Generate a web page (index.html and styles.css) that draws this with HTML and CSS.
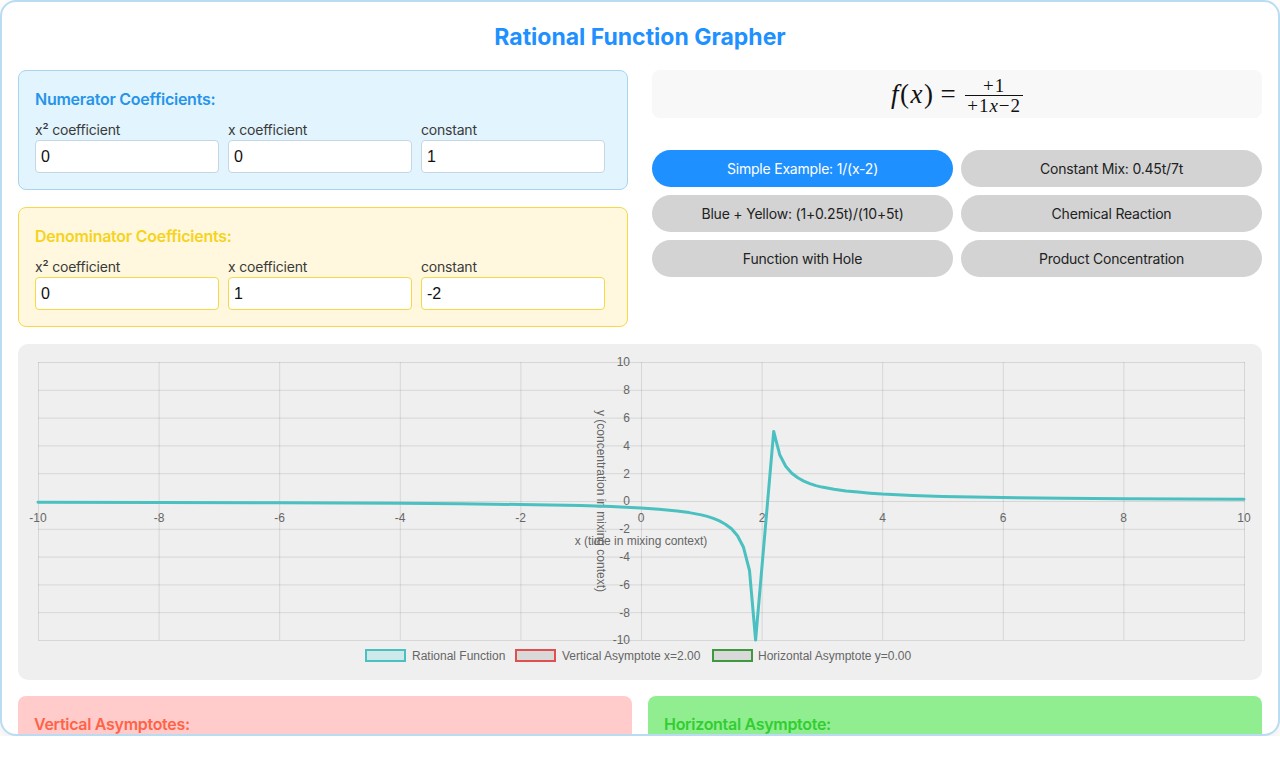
FILE: index.html
```html
<!DOCTYPE html>
<html>
<head>
<meta charset="utf-8">
<link rel="stylesheet" href="styles.css">
</head>
<body>
<div class="app">
  <h1 class="title">Rational Function Grapher</h1>
  <div class="top">
    <div class="coeffs">
      <section class="panel panel-num">
        <h3 class="panel-head">Numerator Coefficients:</h3>
        <div class="fields">
          <label class="field"><span class="field-label">x² coefficient</span><input class="field-input" value="0"></label>
          <label class="field"><span class="field-label">x coefficient</span><input class="field-input" value="0"></label>
          <label class="field"><span class="field-label">constant</span><input class="field-input" value="1"></label>
        </div>
      </section>
      <section class="panel panel-den">
        <h3 class="panel-head">Denominator Coefficients:</h3>
        <div class="fields">
          <label class="field"><span class="field-label">x² coefficient</span><input class="field-input" value="0"></label>
          <label class="field"><span class="field-label">x coefficient</span><input class="field-input" value="1"></label>
          <label class="field"><span class="field-label">constant</span><input class="field-input" value="-2"></label>
        </div>
      </section>
    </div>
    <div class="side">
      <div class="formula">
        <span class="math"><i>f</i>(<i>x</i>)</span><span class="math eq">=</span>
        <span class="frac"><span class="frac-num">+1</span><span class="frac-den">+1<i>x</i>−2</span></span>
      </div>
      <div class="examples">
        <button class="ex-btn active">Simple Example: 1/(x-2)</button>
        <button class="ex-btn">Constant Mix: 0.45t/7t</button>
        <button class="ex-btn">Blue + Yellow: (1+0.25t)/(10+5t)</button>
        <button class="ex-btn">Chemical Reaction</button>
        <button class="ex-btn">Function with Hole</button>
        <button class="ex-btn">Product Concentration</button>
      </div>
    </div>
  </div>
  <div class="chart">
    <svg class="chart-svg" width="1244" height="336" viewBox="0 0 1244 336">
      <g stroke="rgba(0,0,0,0.1)" stroke-width="1">
        <line x1="20.5" y1="18" x2="20.5" y2="296"/>
        <line x1="141.1" y1="18" x2="141.1" y2="296"/>
        <line x1="261.7" y1="18" x2="261.7" y2="296"/>
        <line x1="382.3" y1="18" x2="382.3" y2="296"/>
        <line x1="502.9" y1="18" x2="502.9" y2="296"/>
        <line x1="623.5" y1="18" x2="623.5" y2="296"/>
        <line x1="744.1" y1="18" x2="744.1" y2="296"/>
        <line x1="864.7" y1="18" x2="864.7" y2="296"/>
        <line x1="985.3" y1="18" x2="985.3" y2="296"/>
        <line x1="1105.9" y1="18" x2="1105.9" y2="296"/>
        <line x1="1226.5" y1="18" x2="1226.5" y2="296"/>
        <line x1="20" y1="18.5" x2="1227" y2="18.5"/>
        <line x1="20" y1="46.3" x2="1227" y2="46.3"/>
        <line x1="20" y1="74.1" x2="1227" y2="74.1"/>
        <line x1="20" y1="101.9" x2="1227" y2="101.9"/>
        <line x1="20" y1="129.7" x2="1227" y2="129.7"/>
        <line x1="20" y1="157.5" x2="1227" y2="157.5"/>
        <line x1="20" y1="185.3" x2="1227" y2="185.3"/>
        <line x1="20" y1="213.1" x2="1227" y2="213.1"/>
        <line x1="20" y1="240.9" x2="1227" y2="240.9"/>
        <line x1="20" y1="268.7" x2="1227" y2="268.7"/>
        <line x1="20" y1="296.5" x2="1227" y2="296.5"/>
      </g>
      <g class="tick" text-anchor="end">
        <text x="612" y="22">10</text>
        <text x="612" y="50">8</text>
        <text x="612" y="78">6</text>
        <text x="612" y="106">4</text>
        <text x="612" y="134">2</text>
        <text x="612" y="161">0</text>
        <text x="612" y="189">-2</text>
        <text x="612" y="217">-4</text>
        <text x="612" y="245">-6</text>
        <text x="612" y="273">-8</text>
        <text x="612" y="300">-10</text>
      </g>
      <g class="tick" text-anchor="middle">
        <text x="20" y="178">-10</text>
        <text x="141" y="178">-8</text>
        <text x="261.5" y="178">-6</text>
        <text x="382" y="178">-4</text>
        <text x="502.5" y="178">-2</text>
        <text x="623" y="178">0</text>
        <text x="744" y="178">2</text>
        <text x="864.5" y="178">4</text>
        <text x="985" y="178">6</text>
        <text x="1105.5" y="178">8</text>
        <text x="1226" y="178">10</text>
      </g>
      <text class="tick" x="623" y="201" text-anchor="middle">x (time in mixing context)</text>
      <text class="tick" x="0" y="0" text-anchor="middle" transform="translate(579 157) rotate(90)">y (concentration in mixing context)</text>
      <polyline fill="none" stroke="rgb(75,192,192)" stroke-width="3" stroke-linejoin="round" stroke-linecap="round"
        points="20,158.2 141,158.4 261.2,158.7 381.8,159.3 442.1,159.8 502.4,160.5 562.7,161.6 593,162.5 623,164 641.1,165.3 659.2,166.9 671.2,168.6 683.3,170.9 689.3,172.4 695.4,174.4 701.4,176.9 707.4,180.2 713.5,184.8 719.5,191.8 725.5,203.3 731.5,226.5 737.6,296 755.7,87.5 761.7,110.7 767.7,122.3 773.8,129.2 779.8,133.8 785.8,137.1 791.8,139.6 797.9,141.6 803.9,143.1 816,145.3 828,146.9 840.1,148.1 852.1,149.2 864.2,150.1 894.4,151.4 924.5,152.4 954.7,153.0 984.8,153.5 1045.1,154.2 1105.4,154.7 1165.7,155.0 1226,155.3"/>
      <g class="legend">
        <rect x="348" y="306" width="39" height="11" fill="#cde9e9" stroke="rgb(75,192,192)" stroke-width="2"/>
        <text class="tick" x="394" y="316">Rational Function</text>
        <rect x="498" y="306" width="39" height="11" fill="#d9d9d9" stroke="#e05050" stroke-width="2"/>
        <text class="tick" x="544" y="316">Vertical Asymptote x=2.00</text>
        <rect x="695" y="306" width="39" height="11" fill="#d9d9d9" stroke="#3f9a3f" stroke-width="2"/>
        <text class="tick" x="740" y="316">Horizontal Asymptote y=0.00</text>
      </g>
    </svg>
  </div>
  <div class="results">
    <section class="result result-v"><h3 class="result-head">Vertical Asymptotes:</h3></section>
    <section class="result result-h"><h3 class="result-head">Horizontal Asymptote:</h3></section>
  </div>
</div>
</body>
</html>
```
FILE: styles.css
```css
html, body {
  margin: 0;
  padding: 0;
  background: #ffffff;
}
body {
  font-family: Inter, Roboto, "Liberation Sans", sans-serif;
  color: #333;
}
.app {
  box-sizing: border-box;
  height: 736px;
  border: 2px solid #b9dcf2;
  border-radius: 16px;
  padding: 16px 16px 0;
  overflow: hidden;
  background: #fff;
  box-shadow: 0 6px 18px rgba(0, 0, 0, 0.08);
}
.title {
  margin: 0 0 14px;
  padding-top: 1px;
  font-size: 23px;
  line-height: 37px;
  font-weight: 700;
  letter-spacing: 0;
  text-align: center;
  color: #1e90ff;
}
.top {
  display: grid;
  grid-template-columns: 1fr 1fr;
  column-gap: 24px;
}
.coeffs {
  display: flex;
  flex-direction: column;
  gap: 17px;
}
.panel {
  border-radius: 8px;
  padding: 16px;
  border: 1px solid;
}
.panel-num {
  background: #e2f4fd;
  border-color: #a9d4ee;
}
.panel-den {
  background: #fff8de;
  border-color: #f7d846;
}
.panel-head {
  margin: 0 0 10px;
  font-size: 16px;
  line-height: 24px;
  font-weight: 600;
  letter-spacing: -0.25px;
}
.panel-num .panel-head { color: #2794ea; }
.panel-den .panel-head { color: #f6d31c; }
.fields {
  display: grid;
  grid-template-columns: repeat(3, 184px);
  column-gap: 9px;
}
.field {
  display: flex;
  flex-direction: column;
}
.field-label {
  font-size: 14px;
  line-height: 17px;
  margin-bottom: 2px;
  letter-spacing: -0.2px;
  color: #3a3a3a;
}
.field-input {
  box-sizing: border-box;
  height: 33px;
  width: 100%;
  border: 1px solid #c3d6e2;
  border-radius: 4px;
  padding: 0 5px;
  font: 16px "Liberation Sans", Arial, sans-serif;
  color: #111;
  background: #fff;
}
.panel-den .field-input {
  border-color: #f7d846;
}
.side {
  display: flex;
  flex-direction: column;
}
.formula {
  height: 48px;
  border-radius: 8px;
  background: #f8f8f8;
  display: flex;
  align-items: center;
  justify-content: center;
  font-family: "Liberation Serif", "DejaVu Serif", serif;
  color: #111;
  margin-bottom: 32px;
}
.math {
  font-size: 27px;
  letter-spacing: 1.5px;
}
.eq {
  margin: 0 8px 0 6px;
}
.frac {
  display: inline-flex;
  flex-direction: column;
  align-items: center;
  font-size: 19px;
  line-height: 17px;
  letter-spacing: 1px;
  margin-top: 2px;
}
.frac-num {
  align-self: stretch;
  text-align: center;
  padding: 0 0 1px;
  border-bottom: 1px solid #111;
}
.frac-den {
  padding: 1px 2px 0;
}
.examples {
  display: grid;
  grid-template-columns: 1fr 1fr;
  gap: 8px;
}
.ex-btn {
  height: 37px;
  border: none;
  border-radius: 19px;
  background: #d3d3d3;
  color: #222;
  font-family: Inter, Roboto, "Liberation Sans", sans-serif;
  font-size: 14px;
  letter-spacing: -0.2px;
  padding: 0;
}
.ex-btn.active {
  background: #1e90ff;
  color: #fff;
}
.chart {
  margin-top: 17px;
  height: 336px;
  background: #efefef;
  border-radius: 10px;
}
.chart-svg {
  display: block;
}
.tick {
  font-family: "Liberation Sans", Arial, sans-serif;
  font-size: 12px;
  fill: #666;
}
.results {
  margin-top: 16px;
  display: grid;
  grid-template-columns: 1fr 1fr;
  column-gap: 16px;
}
.result {
  border-radius: 8px;
  padding: 16px;
  height: 80px;
}
.result-v { background: #ffcccb; }
.result-h { background: #90ee90; }
.result-head {
  margin: 0;
  padding-top: 1px;
  font-size: 16px;
  line-height: 22px;
  font-weight: 600;
  letter-spacing: -0.3px;
}
.result-v .result-head { color: #ff6347; }
.result-h .result-head { color: #32cd32; }
```
